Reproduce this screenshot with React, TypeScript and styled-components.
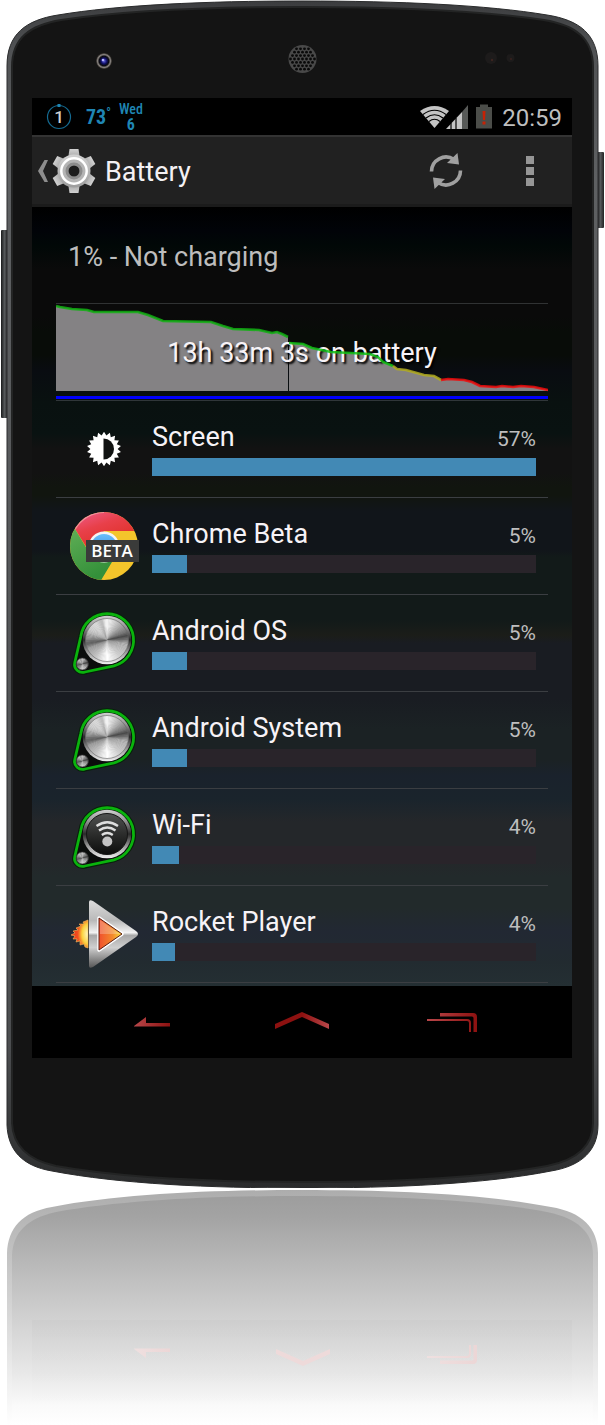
import React from "react";
import styled, { createGlobalStyle } from "styled-components";

const GlobalStyle = createGlobalStyle`
  * { box-sizing: border-box; }
  body { margin: 0; background: #fff; font-family: Roboto, "Open Sans", sans-serif; }
  ul { margin: 0; padding: 0; list-style: none; }
  button { margin: 0; padding: 0; border: 0; background: none; color: inherit; font: inherit; cursor: pointer; }
  svg { display: block; }
`;

const Page = styled.main`
  min-width: 480px;
  overflow: hidden;
`;

const Phone = styled.div`
  position: relative;
  padding: 98px 33px 130px 32px;
`;

const ShellArt = styled.svg`
  position: absolute;
  inset: 0;
  width: 100%;
  height: 100%;
`;

const Screen = styled.div`
  position: relative;
  display: flex;
  flex-direction: column;
  background: #000;
`;

const StatusBar = styled.header`
  display: flex;
  align-items: center;
  justify-content: space-between;
  height: 39px;
  padding: 0 10px 0 14px;
  border-bottom: 2px solid #333;
`;

const StatusGroup = styled.div`
  display: flex;
  align-items: center;
  gap: 8px;
  color: #1f86b4;
  font-family: "Roboto Condensed", "Liberation Sans Narrow", Roboto, sans-serif;
`;

const Temperature = styled.span`
  display: flex;
  align-items: flex-start;
  padding-left: 6px;
  font-size: 20px;
  line-height: 24px;
  font-weight: 700;
`;

const Degree = styled.span`
  font-size: 12px;
  line-height: 16px;
`;

const DateStack = styled.span`
  display: flex;
  flex-direction: column;
  align-items: center;
  font-size: 14px;
  line-height: 16px;
  font-weight: 500;
`;

const DayNumber = styled.span`
  font-size: 16px;
  font-weight: 700;
`;

const StatusIcons = styled.div`
  display: flex;
  align-items: center;
`;

const BatteryGlyph = styled.svg`
  margin: 0 10px 0 7px;
`;

const Clock = styled.time`
  padding-top: 2px;
  color: #bebebe;
  font-size: 24px;
  line-height: 34px;
`;

const ActionBar = styled.div`
  display: flex;
  align-items: center;
  height: 70px;
  padding: 0 24px 0 6px;
  background: #212121;
  border-bottom: 3px solid #1b1b1b;
`;

const UpButton = styled.button`
  display: flex;
  align-items: center;
  gap: 3px;
`;

const Title = styled.h1`
  flex: 1;
  margin: 0 0 0 9px;
  padding-top: 3px;
  color: #f4f1f4;
  font-size: 27px;
  line-height: 32px;
  font-weight: 400;
`;

const IconButton = styled.button`
  display: flex;
  align-items: center;
  justify-content: center;
  width: 36px;
  height: 48px;
`;

const Actions = styled.div`
  display: flex;
  gap: 48px;
`;

const Content = styled.section`
  padding: 0 24px 3px;
  background: linear-gradient(
    #000 0%, #010308 3%, #010807 5%, #0a0a0a 8%, #0a0a0a 14%, #080c08 16%,
    #080c08 19%, #090c11 21%, #091110 25%, #091211 29%, #121212 31%, #121212 34%,
    #11150f 36%, #11150f 37%, #11151a 39%, #11151a 44%, #121a19 45%, #121a19 53%,
    #1b1d19 55%, #191c22 56%, #191c22 63%, #1b2224 67%, #1b2224 71%, #1a222c 73%,
    #1a242c 76%, #24272a 79%, #24272a 84%, #222a2b 86%, #222a2b 90%, #222833 93%,
    #222b30 97%, #242f33 100%
  );
`;

const Level = styled.p`
  margin: 0;
  padding: 34px 12px 30px;
  border-bottom: 1px solid #303233;
  color: #bdbdbd;
  font-size: 27px;
  line-height: 32px;
`;

const History = styled.div`
  display: grid;
  height: 97px;
  border-bottom: 1px solid #303639;
  > * { grid-area: 1 / 1; min-width: 0; }
`;

const HistoryLayer = styled.svg`
  width: 100%;
  height: 96px;
`;

const HistoryLabel = styled.p`
  margin: 0;
  padding-top: 2px;
  align-self: center;
  text-align: center;
  color: #f7f3f7;
  font-size: 27px;
  line-height: 32px;
  text-shadow: 2px 2px 2px #000;
`;

const UsageRow = styled.li`
  display: flex;
  align-items: center;
  height: 97px;
  padding: 0 12px;
  gap: 12px;
  border-bottom: 1px solid #3b3e42;
`;

const Usage = styled.div`
  flex: 1;
  display: flex;
  flex-direction: column;
  gap: 4px;
  padding-bottom: 2px;
`;

const UsageHead = styled.div`
  display: flex;
  align-items: baseline;
  justify-content: space-between;
  height: 34px;
  line-height: 34px;
`;

const AppName = styled.span`
  color: #f7f3f7;
  font-size: 27px;
`;

const Percent = styled.span`
  color: #bebebe;
  font-size: 21px;
`;

const Track = styled.div`
  height: 18px;
  background: #29242a;
`;

const Fill = styled.div`
  height: 100%;
  background: #4289b5;
`;

const NavBar = styled.nav`
  display: grid;
  grid-template-columns: repeat(3, 1fr);
  height: 72px;
  padding: 0 45px;
`;

const NavButton = styled.button`
  display: grid;
  place-items: center;
`;

const ReflectionArt = styled.svg`
  width: 100%;
  height: 237px;
`;

const meshDots: [number, number][] = [];
for (let r = -6; r <= 6; r++) {
  for (let c = -6; c <= 6; c++) {
    const x = c * 4 + (r % 2 ? 2 : 0);
    const y = r * 3.4;
    if (Math.hypot(x, y) < 12.5) meshDots.push([302.5 + x, 59 + y]);
  }
}

const outline =
  "M302 1C205 1 118 5 58 15C26 20 7 34 7 66L7 1125C8 1150 22 1166 52 1171C120 1184 210 1188 302 1188C394 1188 485 1184 551 1171C582 1166 598 1150 598 1125L598 66C598 34 579 20 547 15C487 5 400 1 302 1Z";
const face =
  "M302 7C210 7 122 11 61 20C30 25 12 38 12 67L12 1123C13 1146 28 1160 56 1166C124 1178 210 1182 302 1182C394 1182 481 1178 547 1166C577 1160 593 1146 593 1123L593 67C593 38 575 25 544 20C483 11 394 7 302 7Z";

function Shell() {
  return (
    <ShellArt viewBox="0 0 605 1188" preserveAspectRatio="none" aria-hidden="true">
      <defs>
        <linearGradient id="sideKey" x1="0" x2="1">
          <stop offset="0" stopColor="#191a1b" />
          <stop offset=".5" stopColor="#55585a" />
          <stop offset="1" stopColor="#222" />
        </linearGradient>
        <linearGradient id="rim" x1="0" y1="0" x2="0" y2="1">
          <stop offset="0" stopColor="#3b3c3e" />
          <stop offset=".04" stopColor="#505254" />
          <stop offset=".15" stopColor="#5e6062" />
          <stop offset=".88" stopColor="#4c4e50" />
          <stop offset="1" stopColor="#2a2b2c" />
        </linearGradient>
        <radialGradient id="lens">
          <stop offset="0" stopColor="#6464e8" />
          <stop offset=".35" stopColor="#101066" />
          <stop offset=".6" stopColor="#08080c" />
          <stop offset=".8" stopColor="#8b8683" />
          <stop offset="1" stopColor="#26231f" />
        </radialGradient>
      </defs>
      <rect x="1" y="230" width="7" height="188" rx="1" fill="url(#sideKey)" />
      <rect x="597" y="152" width="7" height="76" rx="1" fill="url(#sideKey)" />
      <path d={outline} fill="url(#rim)" stroke="#2a2b2c" strokeWidth="1" />
      <path d={face} fill="#141414" stroke="#232424" strokeWidth="2" />
      <circle cx="104" cy="61" r="8" fill="url(#lens)" />
      <circle cx="103" cy="60" r="1.300" fill="#b9b9ff" />
      <circle cx="302.5" cy="59" r="14" fill="#494949" />
      {meshDots.map(([x, y]) => (
        <circle key={`${x},${y}`} cx={x} cy={y} r="1.4" fill="#090909" />
      ))}
      <circle cx="491" cy="58" r="6" fill="#1d1b1b" />
      <circle cx="492" cy="60" r="1.2" fill="#3c2420" />
      <circle cx="510.500" cy="58" r="4" fill="#1d1b1b" />
      <circle cx="511" cy="59" r="1" fill="#38221e" />
    </ShellArt>
  );
}

const metalStops: [number, number][] = [
  [0, 245], [14, 225], [40, 175], [66, 120], [78, 75], [90, 125], [102, 180], [140, 205],
  [165, 235], [178, 255], [190, 240], [215, 195], [245, 160], [260, 95], [275, 145],
  [300, 205], [325, 220], [345, 185], [354, 235], [360, 245],
];

function metalShade(angle: number) {
  let i = 0;
  while (i < metalStops.length - 2 && metalStops[i + 1][0] < angle) i++;
  const [a0, v0] = metalStops[i];
  const [a1, v1] = metalStops[i + 1];
  const v = Math.round(v0 + ((angle - a0) / (a1 - a0)) * (v1 - v0));
  return `rgb(${v},${v},${v})`;
}

function MetalDisc({ cx, cy, r }: { cx: number; cy: number; r: number }) {
  const point = (a: number) => {
    const t = ((a - 90) * Math.PI) / 180;
    return `${cx + r * Math.cos(t)} ${cy + r * Math.sin(t)}`;
  };
  return (
    <g>
      {Array.from({ length: 90 }, (_, i) => (
        <path
          key={i}
          d={`M${cx} ${cy}L${point(i * 4)}A${r} ${r} 0 0 1 ${point(i * 4 + 5)}Z`}
          fill={metalShade(i * 4 + 2)}
        />
      ))}
    </g>
  );
}

function KnobIcon({ id, wifi = false }: { id: string; wifi?: boolean }) {
  return (
    <svg width="72" height="72" viewBox="0 0 72 72" aria-hidden="true">
      <defs>
        <linearGradient id={`${id}-rim`} x1="0" y1="0" x2="0" y2="1">
          <stop offset="0" stopColor="#d0d0d0" />
          <stop offset=".25" stopColor="#909090" />
          <stop offset=".5" stopColor="#2a2a2a" />
          <stop offset=".75" stopColor="#9a9a9a" />
          <stop offset="1" stopColor="#efefef" />
        </linearGradient>
        <linearGradient id={`${id}-dark`} x1="0" y1="0" x2="0" y2="1">
          <stop offset="0" stopColor="#515352" />
          <stop offset=".5" stopColor="#2c2d2c" />
          <stop offset="1" stopColor="#0c0d0c" />
        </linearGradient>
      </defs>
      <path d="M12.800 29.500A26.500 26.500 0 1 1 46 58.800L17 65A8 8 0 0 1 6.800 55.500Z" fill="#0c0f0d" stroke="#07210a" strokeWidth="5" />
      <path d="M12.800 29.500A26.500 26.500 0 1 1 46 58.800L17 65A8 8 0 0 1 6.800 55.500Z" fill="#0b0d0c" stroke="#0ab30d" strokeWidth="2.800" />
      <circle cx="39" cy="33" r="24.300" fill={`url(#${id}-rim)`} />
      {wifi ? (
        <>
          <circle cx="39" cy="33" r="20.500" fill={`url(#${id}-dark)`} stroke="#151515" />
          <circle cx="39.300" cy="40.500" r="5" fill="#c4c4c4" />
          <path d="M28.500 25Q39.300 17.500 50 25M31 29.500Q39.300 23.500 47.500 29.500M33.800 34Q39.300 30 44.800 34" fill="none" stroke="#dedede" strokeWidth="2.300" />
        </>
      ) : (
        <>
          <MetalDisc cx={39} cy={33} r={21.5} />
          <circle cx="39" cy="33" r="21.500" fill="none" stroke="#666" strokeOpacity=".6" />
        </>
      )}
      <MetalDisc cx={14.3} cy={57} r={6} />
      <circle cx="14.300" cy="57" r="6" fill="none" stroke="#333" strokeWidth=".8" />
    </svg>
  );
}

function BrightnessIcon() {
  const points = Array.from({ length: 36 }, (_, i) => {
    const r = i % 2 ? 13.6 : 17.2;
    const t = (i * Math.PI) / 18 - Math.PI / 2;
    return `${36 + r * Math.cos(t)},${36 + r * Math.sin(t)}`;
  }).join(" ");
  return (
    <svg width="72" height="72" viewBox="0 0 72 72" aria-hidden="true">
      <polygon points={points} fill="#fff" />
      <path d="M35.500 25.500A10.500 10.500 0 0 1 35.500 46.500Z" fill="#101211" />
    </svg>
  );
}

function ChromeBetaIcon() {
  return (
    <svg width="72" height="72" viewBox="0 0 72 72" role="img" aria-label="Chrome Beta">
      <defs>
        <clipPath id="chromeDisc"><circle cx="36" cy="36" r="34" /></clipPath>
        <linearGradient id="chromeRed" x1="0" y1="0" x2=".6" y2="1">
          <stop offset="0" stopColor="#f0649a" />
          <stop offset=".45" stopColor="#e8404a" />
          <stop offset="1" stopColor="#dd2b1d" />
        </linearGradient>
        <linearGradient id="chromeGreen" x1="0" y1="0" x2=".4" y2="1">
          <stop offset="0" stopColor="#68b45b" />
          <stop offset="1" stopColor="#34903a" />
        </linearGradient>
        <linearGradient id="chromeBlue" x1="0" y1="0" x2="0" y2="1">
          <stop offset="0" stopColor="#69c0fb" />
          <stop offset="1" stopColor="#2472cc" />
        </linearGradient>
      </defs>
      <g clipPath="url(#chromeDisc)">
        <rect width="72" height="72" fill="#f4c52b" />
        <path d="M0 0H72V21H36L22 43L7 19Z" fill="url(#chromeRed)" />
        <path d="M0 8L7 19L22 44L44 52L32 72H0Z" fill="url(#chromeGreen)" />
        <path d="M36 2A34 34 0 0 0 7 19" fill="none" stroke="#fff" strokeOpacity=".35" strokeWidth="2" />
      </g>
      <circle cx="36" cy="37" r="15.500" fill="#f4f4f4" />
      <circle cx="36" cy="37" r="13" fill="url(#chromeBlue)" />
      <rect x="18" y="30" width="53" height="22" fill="#3a3b3a" />
      <text x="44" y="47" textAnchor="middle" fill="#fff" fontFamily="Open Sans, sans-serif" fontWeight="600" fontSize="17">BETA</text>
    </svg>
  );
}

function RocketIcon() {
  return (
    <svg width="72" height="72" viewBox="0 0 72 72" aria-hidden="true">
      <defs>
        <linearGradient id="steel" x1="0" y1="0" x2="0" y2="1">
          <stop offset="0" stopColor="#dcdcdc" />
          <stop offset=".3" stopColor="#b9b9b9" />
          <stop offset=".48" stopColor="#f2f2f2" />
          <stop offset=".52" stopColor="#a8a8a8" />
          <stop offset=".7" stopColor="#cfcfcf" />
          <stop offset="1" stopColor="#565656" />
        </linearGradient>
        <linearGradient id="ember" x1="0" y1="0" x2="1" y2="0">
          <stop offset="0" stopColor="#f0502e" />
          <stop offset=".6" stopColor="#f38b2c" />
          <stop offset="1" stopColor="#fbe53c" />
        </linearGradient>
        <radialGradient id="flame" cx="1" cy=".5" r="1">
          <stop offset="0" stopColor="#fff9c4" />
          <stop offset=".35" stopColor="#fbd23e" />
          <stop offset=".6" stopColor="#f0501f" />
          <stop offset="1" stopColor="#e8301b" />
        </radialGradient>
      </defs>
      <path d="M20 22L15 24L16 26L11 26L13 28L8 30L10 32L5 33L7 35L3 37L7 38L5 41L9 41L8 44L12 43L12 47L16 46L17 49L20 50Z" fill="url(#flame)" stroke="#f8c15a" strokeWidth=".6" />
      <path d="M21 4Q21 1 25 3L68 33Q72 36 68 39L25 69Q21 71 21 68Z" fill="url(#steel)" />
      <path d="M31 20L54 36L31 52Z" fill="url(#ember)" stroke="#fff" strokeWidth="3.500" strokeLinejoin="round" />
      <path d="M31 20L54 36L31 52Z" fill="url(#ember)" stroke="#5a1b10" strokeWidth="1" strokeLinejoin="round" />
      <path d="M32 22L52 36H32Z" fill="#fff" fillOpacity=".25" />
    </svg>
  );
}

function GearIcon() {
  return (
    <svg width="44" height="44" viewBox="0 0 44 44" aria-hidden="true">
      <defs>
        <linearGradient id="gear" x1="0" y1="0" x2="0" y2="1">
          <stop offset="0" stopColor="#d2d2d2" />
          <stop offset="1" stopColor="#9d9d9d" />
        </linearGradient>
      </defs>
      <g fill="url(#gear)">
        {[0, 60, 120, 180, 240, 300].map((a) => (
          <path key={a} d="M17.500 0H26.500L28 10H16Z" transform={`rotate(${a} 22 22)`} />
        ))}
        <circle cx="22" cy="22" r="16.500" />
      </g>
      <circle cx="22" cy="22" r="12.700" fill="#b4b4b4" stroke="#fff" strokeWidth="2.500" />
      <circle cx="22" cy="22" r="7" fill="none" stroke="#8c8c8c" strokeWidth="3" />
      <circle cx="22" cy="22" r="5.500" fill="#1c1c1c" />
    </svg>
  );
}

const arrowHalf = (
  <>
    <path d="M3.500 18.500A14.500 14.500 0 0 1 26 6.500" fill="none" stroke="#a0a0a0" strokeWidth="3.600" />
    <path d="M29.500 0L31 11.500L19 10Z" fill="#a0a0a0" />
  </>
);

function RefreshIcon() {
  return (
    <svg width="36" height="36" viewBox="0 0 36 36" aria-hidden="true">
      {arrowHalf}
      <g transform="rotate(180 18 18)">{arrowHalf}</g>
    </svg>
  );
}

function NavGradients({ id, muted }: { id: string; muted?: boolean }) {
  const light = muted ? "#efe0e0" : "#b8474a";
  const deep = muted ? "#ecd6d6" : "#8d1110";
  return (
    <defs>
      <linearGradient id={id}><stop offset="0" stopColor={light} /><stop offset="1" stopColor={deep} /></linearGradient>
      <linearGradient id={`${id}-rev`}><stop offset="0" stopColor={deep} /><stop offset=".5" stopColor={deep} /><stop offset="1" stopColor={light} /></linearGradient>
    </defs>
  );
}

const backPath = "M0 9L12 0V6H36V9.500H0Z";
const homePath = "M0 12L27 0L54 12V17L27 5L0 17Z";
const recentsPath = "M13 0H46Q50 0 50 4V19H46.500V5Q46.500 3.500 45 3.500H13ZM0 6H40Q44 6 44 10V19H42V10Q42 8 40 8H0Z";

function NavIcon({ id, d, width, height, fillRef }: { id: string; d: string; width: number; height: number; fillRef: string }) {
  return (
    <svg width={width} height={height} viewBox={`0 0 ${width} ${height}`} aria-hidden="true">
      <NavGradients id={id} />
      <path d={d} fill={`url(#${fillRef})`} />
    </svg>
  );
}

const green1 = "0,3 4,4 16,6 31,7 38,9 82,9 92,12 107,18 155,19 167,23 177,26 203,27 216,30 221,29 226,31 232,34";
const green2 = "233,40 247,41 256,45 275,49 314,51 322,54 327,59 337,63";
const yellow = "337,63 341,66 350,67 368,72 378,73 385,77";
const red = "385,77 392,76 408,77 416,79 424,83 440,84 446,83 457,84 465,83 478,84 492,87";

function BatteryHistory() {
  return (
    <History>
      <HistoryLayer viewBox="0 1 492 96" preserveAspectRatio="none" aria-hidden="true">
        <polygon points={`${green1} 232,88 0,88`} fill="#848284" />
        <polygon points={`${green2} ${yellow} ${red} 492,88 233,88`} fill="#848284" />
        <rect x="0" y="93" width="492" height="3" fill="#0000fe" />
      </HistoryLayer>
      <HistoryLabel>13h 33m 3s on battery</HistoryLabel>
      <HistoryLayer viewBox="0 1 492 96" preserveAspectRatio="none" aria-hidden="true">
        <g fill="none" strokeWidth="2.600" strokeOpacity=".85">
          <polyline points={green1} stroke="#10b012" />
          <polyline points={green2} stroke="#10c014" />
          <polyline points={yellow} stroke="#b3ad20" />
          <polyline points={red} stroke="#f00c0c" />
        </g>
      </HistoryLayer>
    </History>
  );
}

const usage = [
  { name: "Screen", percent: 57, bar: 100, icon: <BrightnessIcon /> },
  { name: "Chrome Beta", percent: 5, bar: 9.1, icon: <ChromeBetaIcon /> },
  { name: "Android OS", percent: 5, bar: 9.1, icon: <KnobIcon id="knobOs" /> },
  { name: "Android System", percent: 5, bar: 9.1, icon: <KnobIcon id="knobSystem" /> },
  { name: "Wi-Fi", percent: 4, bar: 7, icon: <KnobIcon id="knobWifi" wifi /> },
  { name: "Rocket Player", percent: 4, bar: 6, icon: <RocketIcon /> },
];

function Reflection() {
  return (
    <ReflectionArt viewBox="0 0 605 237" preserveAspectRatio="none" aria-hidden="true">
      <defs>
        <linearGradient id="fade" x1="0" y1="0" x2="0" y2="237" gradientUnits="userSpaceOnUse">
          <stop offset="0" stopColor="#9b9b9b" />
          <stop offset=".12" stopColor="#a3a3a3" />
          <stop offset=".35" stopColor="#bcbcbc" />
          <stop offset=".56" stopColor="#d2d2d2" />
          <stop offset=".78" stopColor="#e8e8e8" />
          <stop offset=".92" stopColor="#fafafa" />
          <stop offset="1" stopColor="#fff" />
        </linearGradient>
        <linearGradient id="fadeRim" x1="0" y1="0" x2="0" y2="237" gradientUnits="userSpaceOnUse">
          <stop offset="0" stopColor="#acacac" />
          <stop offset=".5" stopColor="#d4d4d4" />
          <stop offset="1" stopColor="#fff" />
        </linearGradient>
        <linearGradient id="fadeScreen" x1="0" y1="0" x2="0" y2="1">
          <stop offset="0" stopColor="#000" stopOpacity=".02" />
          <stop offset="1" stopColor="#000" stopOpacity="0" />
        </linearGradient>
      </defs>
      <NavGradients id="navMuted" muted />
      <path d="M302 2C210 2 120 6 52 19C22 24 8 40 7 65V237H598V65C598 40 582 24 551 19C485 6 394 2 302 2Z" fill="url(#fadeRim)" />
      <path d="M302 8C210 8 124 12 56 24C28 30 13 44 12 67V237H593V67C593 44 577 30 547 24C481 12 394 8 302 8Z" fill="url(#fade)" />
      <rect x="32" y="132" width="540" height="90" fill="url(#fadeScreen)" />
      <g fill="url(#navMuted)">
        <path d={backPath} transform="translate(134 170) scale(1 -1)" />
        <path d={homePath} transform="translate(276 178) scale(1 -1)" fill="#eedada" />
        <path d={recentsPath} transform="translate(427 176) scale(1 -1)" />
      </g>
    </ReflectionArt>
  );
}

export default function App() {
  return (
    <Page>
      <GlobalStyle />
      <Phone>
        <Shell />
        <Screen>
          <StatusBar>
            <StatusGroup>
              <svg width="26" height="28" viewBox="0 0 26 28" role="img" aria-label="1 percent">
                <circle cx="13" cy="14" r="11.500" fill="none" stroke="#146a91" strokeWidth="1.200" />
                <rect x="11.500" y="1" width="3" height="3" fill="#1f86b4" />
                <text x="13" y="20" textAnchor="middle" fill="#d0d0d0" fontFamily="Roboto, sans-serif" fontWeight="500" fontSize="17">1</text>
              </svg>
              <Temperature>73<Degree>°</Degree></Temperature>
              <DateStack>Wed<DayNumber>6</DayNumber></DateStack>
            </StatusGroup>
            <StatusIcons>
              <svg width="50" height="28" viewBox="0 0 50 28" role="img" aria-label="Wi-Fi and mobile signal">
                <path d="M1 8Q15.500 -2 30 8L15.500 25Z" fill="#c4c4c4" />
                <path d="M4 11.500Q15.500 3 27 11.500M7 15Q15.500 8.500 24 15M10 18.500Q15.500 14 21 18.500" fill="none" stroke="#000" strokeWidth="1.200" />
                <path d="M27 26L43 9V26Z" fill="#c4c4c4" />
                <path d="M43 9L49 2V26H43Z" fill="#585a58" />
                <path d="M32 20V26M37 15V26" stroke="#000" strokeWidth="1.200" />
              </svg>
              <BatteryGlyph width="16" height="28" viewBox="0 0 16 28" role="img" aria-label="Battery low">
                <path d="M0 4H4V1.500H12V4H16V25.500H0Z" fill="#4b4d49" />
                <path d="M6.500 8H9.500L9 17H7ZM6.500 18.500H9.500V21.500H6.500Z" fill="#c62205" />
              </BatteryGlyph>
              <Clock>20:59</Clock>
            </StatusIcons>
          </StatusBar>
          <ActionBar>
            <UpButton aria-label="Navigate up">
              <svg width="11" height="22" viewBox="0 0 11 22" aria-hidden="true">
                <path d="M10 0H6.500L0 11L6.500 22H10L5 11Z" fill="#8e8e8e" />
              </svg>
              <GearIcon />
            </UpButton>
            <Title>Battery</Title>
            <Actions>
              <IconButton aria-label="Refresh"><RefreshIcon /></IconButton>
              <IconButton aria-label="More options">
                <svg width="8" height="30" viewBox="0 0 8 30" aria-hidden="true">
                  <path d="M0 0H8V8H0ZM0 11H8V19H0ZM0 22H8V30H0Z" fill="#969696" />
                </svg>
              </IconButton>
            </Actions>
          </ActionBar>
          <Content>
            <Level>1% - Not charging</Level>
            <BatteryHistory />
            <ul>
              {usage.map((item) => (
                <UsageRow key={item.name}>
                  {item.icon}
                  <Usage>
                    <UsageHead>
                      <AppName>{item.name}</AppName>
                      <Percent>{item.percent}%</Percent>
                    </UsageHead>
                    <Track role="progressbar" aria-label={item.name} aria-valuenow={item.percent}>
                      <Fill style={{ width: `${item.bar}%` }} />
                    </Track>
                  </Usage>
                </UsageRow>
              ))}
            </ul>
          </Content>
          <NavBar>
            <NavButton aria-label="Back"><NavIcon id="navBack" fillRef="navBack" d={backPath} width={36} height={10} /></NavButton>
            <NavButton aria-label="Home"><NavIcon id="navHome" fillRef="navHome-rev" d={homePath} width={54} height={20} /></NavButton>
            <NavButton aria-label="Recent apps"><NavIcon id="navRecents" fillRef="navRecents" d={recentsPath} width={50} height={19} /></NavButton>
          </NavBar>
        </Screen>
      </Phone>
      <Reflection />
    </Page>
  );
}
